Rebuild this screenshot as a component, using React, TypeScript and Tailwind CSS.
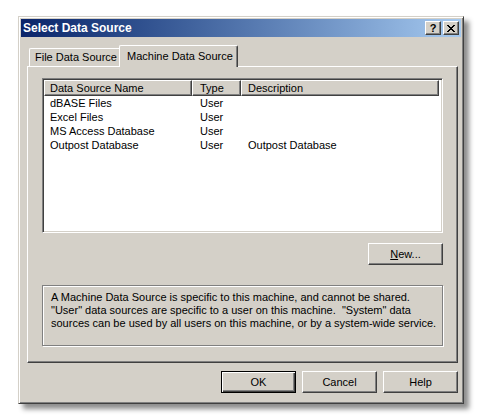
const raised =
  "border border-t-white border-l-white border-r-[#404040] border-b-[#404040] shadow-[inset_-1px_-1px_#808080]";

function Btn({ children, def, className = "" }: { children: React.ReactNode; def?: boolean; className?: string }) {
  return (
    <div
      className={`flex h-[22px] w-[75px] items-center justify-center bg-[#d4d0c8] text-[11px] text-black ${
        def
          ? "border border-black shadow-[inset_1px_1px_#fff,inset_-1px_-1px_#404040,inset_-2px_-2px_#808080]"
          : raised
      } ${className}`}
    >
      {children}
    </div>
  );
}

const rows = [
  { name: "dBASE Files", type: "User", desc: "" },
  { name: "Excel Files", type: "User", desc: "" },
  { name: "MS Access Database", type: "User", desc: "" },
  { name: "Outpost Database", type: "User", desc: "Outpost Database" },
];

export default function App() {
  return (
    <div className="h-[419px] w-[485px] bg-white pl-[18px] pt-[16px] font-['Liberation_Sans',Arial,sans-serif] text-black">
      {/* window */}
      <div className="flex h-[388px] w-[446px] flex-col border border-t-[#d4d0c8] border-l-[#d4d0c8] border-r-[#404040] border-b-[#404040] bg-[#d4d0c8] p-[2px] shadow-[inset_1px_1px_#fff,inset_-1px_-1px_#808080,5px_5px_5px_rgba(0,0,0,0.45)]">
        {/* title bar */}
        <div className="flex h-[18px] shrink-0 items-center bg-linear-to-r from-[#0a246a] to-[#a6caf0]">
          <span className="pl-[2px] text-[12px] font-bold leading-none text-white">Select Data Source</span>
          <div className="ml-auto mr-[2px] flex gap-[2px]">
            <div className={`flex h-[14px] w-[16px] items-center justify-center bg-[#d4d0c8] ${raised}`}>
              <span className="text-[11px] font-bold leading-none">?</span>
            </div>
            <div className={`flex h-[14px] w-[16px] items-center justify-center bg-[#d4d0c8] ${raised}`}>
              <svg width="8" height="7" viewBox="0 0 8 7" shapeRendering="crispEdges">
                <path d="M0 0h2v1H0zM6 0h2v1H6zM1 1h2v1H1zM5 1h2v1H5zM2 2h4v1H2zM3 3h2v1H3zM2 4h4v1H2zM1 5h2v1H1zM5 5h2v1H5zM0 6h2v1H0zM6 6h2v1H6z" fill="#000" />
              </svg>
            </div>
          </div>
        </div>

        {/* tabs */}
        <div className="flex h-[29px] shrink-0 items-end pl-[8px]">
          <div className="flex h-[18px] w-[92px] items-center rounded-tl-[2px] border-l border-t border-white pl-[5px] text-[11px] shadow-[inset_-1px_0_#808080]">
            File Data Source
          </div>
          <div className="relative z-10 -mb-px -ml-[2px] flex h-[22px] w-[119px] items-start rounded-t-[2px] border-l border-t border-r border-l-white border-t-white border-r-[#404040] bg-[#d4d0c8] pl-[7px] pt-[2px] text-[11px] shadow-[inset_-1px_0_#808080]">
            Machine Data Source
          </div>
        </div>

        {/* panel */}
        <div className="ml-[6px] flex h-[297px] w-[431px] shrink-0 flex-col border border-t-white border-l-white border-r-[#404040] border-b-[#404040] pl-[14px] pt-[11px] shadow-[inset_-1px_-1px_#808080]">
          {/* list */}
          <div className="h-[155px] w-[401px] border border-t-[#808080] border-l-[#808080] border-r-white border-b-white bg-white p-px shadow-[inset_1px_1px_#404040,inset_-1px_-1px_#d4d0c8]">
            <div className="flex h-[16px] text-[11px]">
              <div className={`flex w-[148px] items-center bg-[#d4d0c8] pl-[5px] ${raised}`}>Data Source Name</div>
              <div className={`flex w-[49px] items-center bg-[#d4d0c8] pl-[7px] ${raised}`}>Type</div>
              <div className={`flex w-[198px] items-center bg-[#d4d0c8] pl-[6px] ${raised}`}>Description</div>
            </div>
            {rows.map((r) => (
              <div key={r.name} className="flex h-[14px] items-center text-[11px] leading-none">
                <div className="w-[148px] pl-[6px]">{r.name}</div>
                <div className="w-[49px] pl-[8px]">{r.type}</div>
                <div className="pl-[7px]">{r.desc}</div>
              </div>
            ))}
          </div>

          <div className="mt-[10px] flex w-[401px] justify-end">
            <Btn className="w-[74px]">
              <span>
                <span className="underline">N</span>ew...
              </span>
            </Btn>
          </div>

          {/* info */}
          <div className="mt-[20px] h-[61px] w-[401px] border border-[#808080] pl-[8px] pt-[5px] text-[11px] leading-[13px] shadow-[inset_1px_1px_#fff,1px_1px_#fff]">
            <p>A Machine Data Source is specific to this machine, and cannot be shared.</p>
            <p>&quot;User&quot; data sources are specific to a user on this machine.&nbsp; &quot;System&quot; data</p>
            <p>sources can be used by all users on this machine, or by a system-wide service.</p>
          </div>
        </div>

        {/* buttons */}
        <div className="ml-[6px] mt-[8px] flex w-[431px] justify-end gap-[6px]">
          <Btn def>OK</Btn>
          <Btn>Cancel</Btn>
          <Btn>Help</Btn>
        </div>
      </div>
    </div>
  );
}
